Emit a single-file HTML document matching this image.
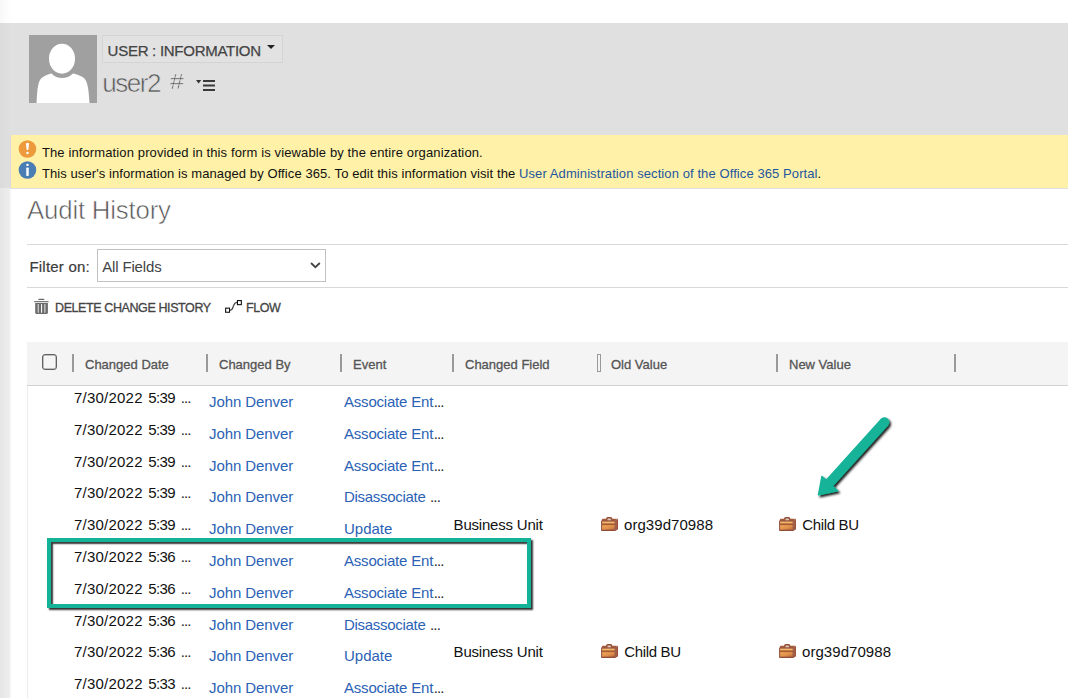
<!DOCTYPE html>
<html lang="en">
<head>
<meta charset="utf-8">
<title>User: Information - Audit History</title>
<style>
html,body{margin:0;padding:0;}
body{width:1068px;height:698px;overflow:hidden;background:#fff;position:relative;
  font-family:"Liberation Sans",sans-serif;color:#000;}
.abs{position:absolute;white-space:nowrap;}
#leftfade{left:0;top:0;width:12px;height:698px;
  background:linear-gradient(to right,#e6e6e6 0,#eeeeee 9.8px,#fbfbfb 10.6px,#fff 12px);}
#topwhite{left:0;top:0;width:1068px;height:23px;background:linear-gradient(to right,#f8f8f8 0,#fdfdfd 8px,#fff 13px);}
#hdr{left:0;top:23px;width:1068px;height:112px;background:#e0e0e0;}
#hdrl{left:0;top:23px;width:10px;height:165px;background:linear-gradient(to right,#dbdbdb 0,#dedede 5px,#dfdfdf 10px);}
#avatar{left:29px;top:35px;width:68px;height:68px;}
#formsel{left:102px;top:35px;width:179px;height:25.5px;border:1px solid #d4d4d4;background:#e2e2e2;box-sizing:content-box;}
#formsel span{position:absolute;left:4.6px;top:6px;font-size:15px;line-height:17px;color:#444;letter-spacing:-0.27px;
  -webkit-text-stroke:0.25px #444;}
#formsel i{position:absolute;left:164px;top:8.5px;width:0;height:0;border-left:4px solid transparent;border-right:4px solid transparent;border-top:4.5px solid #222;}
#uname{left:102.3px;top:68.2px;font-size:26px;line-height:30px;color:#555;letter-spacing:-1.45px;-webkit-text-stroke:0.6px #e0e0e0;}
#hash{left:169.8px;top:67px;font-size:22px;transform:scaleX(1.14);transform-origin:0 0;line-height:30px;color:#555;-webkit-text-stroke:0.5px #e0e0e0;}
#menuic{left:196px;top:79px;width:20px;height:13px;}
#banner{left:10px;top:135px;width:1058px;height:54px;background:#fff1a8;border-bottom:1px solid #dedee4;border-left:1px solid #d8d8de;box-sizing:border-box;}
.bl{font-size:13px;line-height:16px;color:#111;left:41.9px;letter-spacing:0.124px;}
.bl a{color:#1e56a0;text-decoration:none;}
#title{left:27.1px;top:194.6px;font-size:25.8px;line-height:30px;letter-spacing:-0.2px;color:#555;-webkit-text-stroke:0.6px #fff;}
.hr{left:27px;width:1041px;height:1px;background:#d8d8d8;}
#flabel{left:29.4px;top:258px;font-size:15px;line-height:17px;color:#3c3c3c;-webkit-text-stroke:0.22px #3c3c3c;letter-spacing:0.22px;}
#fsel{left:97px;top:249px;width:227px;height:31px;border:1px solid #c1c1c1;border-radius:0;background:#fff;}
#fsel span{position:absolute;left:4.2px;top:8px;font-size:15px;line-height:17px;color:#444;letter-spacing:-0.15px;}
#fsel svg{position:absolute;left:212px;top:12px;}
.tb{font-size:12.5px;line-height:16px;color:#444;-webkit-text-stroke:0.3px #444;top:299.7px;letter-spacing:-0.4px;}
#thead{left:27px;top:342px;width:1041px;height:43px;background:#f4f4f4;border-bottom:1px solid #d2d2d2;box-sizing:content-box;}
.sep{top:354px;width:2px;height:18px;background:#9a9a9a;}
.th{top:356.8px;font-size:13px;line-height:16px;color:#555;-webkit-text-stroke:0.3px #555;}
#cb{left:42px;top:354px;width:13px;height:14px;border:1px solid #606060;border-radius:3px;background:#f5f5f5;box-shadow:inset 0 0 0 0.5px #8a8a8a;}
.d{font-size:15px;line-height:17px;color:#111;left:74px;}
.n,.e{font-size:15px;line-height:17px;color:#2b62b5;}
.n{left:209px;letter-spacing:-0.08px;}
.d1{letter-spacing:0.22px;}
.d2{letter-spacing:-0.65px;margin-left:1.4px;margin-right:1.6px;}
.el{letter-spacing:-0.85px;color:#222;}
.e1{letter-spacing:-0.2px;}
.e2{letter-spacing:-0.29px;}
.e .el{margin-left:0.6px;}
.o,.v{letter-spacing:0.06px;}
.cbu{letter-spacing:-0.36px;margin-left:0.3px;}
.e{left:344px;}
.f,.o,.v{font-size:15px;line-height:17px;color:#111;}
.f{left:453.6px;letter-spacing:-0.2px;}
.o{left:624px;}
.v{left:802px;}
.bc{width:17px;height:14px;}
#vline{left:27px;top:386px;width:1px;height:312px;background:#ececec;}
#tealbox{left:47px;top:538px;width:476px;height:62px;border:4px solid #13b398;
  box-shadow:2px 2px 1.6px rgba(0,0,0,0.78), inset 2px 2px 1.6px rgba(0,0,0,0.78);}
</style>
</head>
<body>
<div class="abs" id="leftfade"></div>
<div class="abs" id="topwhite"></div>
<div class="abs" id="hdr"></div>
<div class="abs" id="hdrl"></div>
<svg class="abs" id="avatar" viewBox="0 0 68 68">
  <rect width="68" height="68" fill="#a0a0a0"/>
  <path d="M7.5 68 C8.5 52 9 45 14 42 C18 39.5 20 39 22.5 38.5 C28 44.5 38 44.5 44 38.5 C47 39 50 40 53.5 42 C58.5 45 59.5 52 60.5 68 Z" fill="#fff"/>
  <ellipse cx="33" cy="23.7" rx="13" ry="15" fill="#fff"/>
</svg>
<div class="abs" id="formsel"><span>USER : INFORMATION</span><i></i></div>
<div class="abs" id="uname">user2</div>
<div class="abs" id="hash">#</div>
<svg class="abs" id="menuic" viewBox="0 0 20 13">
  <path d="M-0.1 0.9 H5.3 L2.6 4.4 Z" fill="#333"/>
  <rect x="7" y="1" width="12" height="2" fill="#3a3a3a"/>
  <rect x="7" y="5.5" width="12" height="2" fill="#3a3a3a"/>
  <rect x="7" y="10" width="12" height="2" fill="#3a3a3a"/>
</svg>

<div class="abs" id="banner"></div>
<svg class="abs" style="left:18px;top:140px" width="19" height="19" viewBox="0 0 19 19">
  <circle cx="9.45" cy="9.05" r="8.8" fill="#ec9a3c"/>
  <path d="M8 3.9 Q8 3.1 8.8 3.1 H10.2 Q11 3.1 11 3.9 L10.4 9.4 Q10.3 10 9.5 10 Q8.7 10 8.6 9.4 Z" fill="#fff"/>
  <rect x="8.2" y="11.7" width="2.6" height="2.5" rx="1.1" fill="#fff"/>
</svg>
<svg class="abs" style="left:18px;top:161px" width="19" height="19" viewBox="0 0 19 19">
  <circle cx="9.45" cy="9.05" r="8.8" fill="#4a7db4"/>
  <rect x="8.2" y="6.6" width="2.6" height="8.3" rx="0.7" fill="#f4f7fb"/>
  <rect x="8.2" y="2.8" width="2.6" height="2.3" rx="1" fill="#f4f7fb"/>
</svg>
<div class="abs bl" id="bl1" style="top:144.8px">The information provided in this form is viewable by the entire organization.</div>
<div class="abs bl" id="bl2" style="top:165.5px;letter-spacing:0.09px">This user's information is managed by Office 365. To edit this information visit the <a>User Administration section of the Office 365 Portal</a>.</div>

<div class="abs" id="title">Audit History</div>
<div class="abs hr" style="top:244px"></div>
<div class="abs" id="flabel">Filter on:</div>
<div class="abs" id="fsel"><span>All Fields</span>
  <svg width="11" height="7" viewBox="0 0 11 7"><path d="M1 1 L5.4 5.2 L9.8 1" fill="none" stroke="#444" stroke-width="1.8"/></svg>
</div>
<div class="abs hr" style="top:287px"></div>

<svg class="abs" style="left:34px;top:298px" width="15" height="17" viewBox="0 0 15 17">
  <rect x="4.3" y="0.8" width="6.1" height="1.2" rx="0.6" fill="#6a6a6a"/>
  <rect x="0.1" y="2.9" width="14.6" height="1.4" rx="0.5" fill="#7a7a7a"/>
  <path d="M1.2 5.1 H13.9 V14.4 Q13.9 16 12.3 16 H2.8 Q1.2 16 1.2 14.4 Z" fill="#6c6c6c"/>
  <rect x="3.65" y="6" width="1.2" height="8.8" rx="0.5" fill="#d2d2d2"/>
  <rect x="7" y="6" width="1.1" height="8.8" rx="0.5" fill="#f6f6f6"/>
  <rect x="10.25" y="6" width="1.2" height="8.8" rx="0.5" fill="#d2d2d2"/>
</svg>
<div class="abs tb" id="tb1" style="left:55px">DELETE CHANGE HISTORY</div>
<svg class="abs" style="left:225px;top:299px" width="18" height="15" viewBox="0 0 18 15">
  <rect x="0.65" y="9.15" width="3.9" height="4.1" fill="none" stroke="#111" stroke-width="1.1"/>
  <rect x="12.45" y="1.55" width="3.9" height="4.1" fill="none" stroke="#111" stroke-width="1.1"/>
  <path d="M5 11.3 C8 11.3 7.6 8.6 8.7 6.2 C9.6 4 9.8 3.3 12 3.3" fill="none" stroke="#444" stroke-width="1.3"/>
</svg>
<div class="abs tb" id="tb2" style="left:246px">FLOW</div>

<div class="abs" id="thead"></div>
<div class="abs" id="vline"></div>
<div class="abs" id="cb"></div>
<div class="abs sep" style="left:72px"></div>
<div class="abs sep" style="left:206px"></div>
<div class="abs sep" style="left:340px"></div>
<div class="abs sep" style="left:452px"></div>
<div class="abs sep" style="left:597px;background:none;border:1px solid #9a9a9a;width:2px;box-sizing:content-box;height:16px"></div>
<div class="abs sep" style="left:776px"></div>
<div class="abs sep" style="left:954px"></div>
<div class="abs th" style="left:85px">Changed Date</div>
<div class="abs th" style="left:219px">Changed By</div>
<div class="abs th" style="left:353px">Event</div>
<div class="abs th" style="left:465px">Changed Field</div>
<div class="abs th" style="left:611px">Old Value</div>
<div class="abs th" style="left:789px">New Value</div>


<svg width="0" height="0" style="position:absolute">
  <defs>
    <linearGradient id="bcg" x1="0" y1="0" x2="0" y2="1">
      <stop offset="0" stop-color="#d98a44"/><stop offset="0.45" stop-color="#f0b264"/><stop offset="0.5" stop-color="#c97c3c"/><stop offset="1" stop-color="#e09850"/>
    </linearGradient>
    <symbol id="bcase" viewBox="0 0 17 14">
      <path d="M5.7 3.4 V2 Q5.7 0.7 7 0.7 H9.4 Q10.7 0.7 10.7 2 V3.4" fill="none" stroke="#8a4a30" stroke-width="1.4"/>
      <path d="M0.3 4 L1.4 1.7 H16.4 L14.6 4 Z" fill="#a25a3c"/>
      <path d="M14.4 4 L17 1.8 V12.2 L14.4 13.9 Z" fill="#98503a"/>
      <path d="M15.3 4.2 L16.1 3.5 V12 L15.3 12.6 Z" fill="#b87050" opacity="0.7"/>
      <rect x="6.6" y="2" width="3.2" height="1.4" fill="#dcc6bc"/>
      <rect x="0.1" y="3.7" width="14.6" height="10.2" rx="0.7" fill="#8f4c38"/>
      <rect x="1.1" y="4.6" width="12.6" height="2.1" fill="url(#bcg1)"/>
      <rect x="1.1" y="6.7" width="12.6" height="1.4" fill="#a85a34"/>
      <rect x="1.1" y="8.1" width="12.6" height="4.6" fill="url(#bcg2)"/>
    </symbol>
    <linearGradient id="bcg1" x1="0" y1="0" x2="0" y2="1"><stop offset="0" stop-color="#f6c67a"/><stop offset="1" stop-color="#eba653"/></linearGradient>
    <linearGradient id="bcg2" x1="0" y1="0" x2="1" y2="1"><stop offset="0" stop-color="#f0a655"/><stop offset="0.55" stop-color="#e0924c"/><stop offset="1" stop-color="#b8683e"/></linearGradient>
    <filter id="ds" x="-20%" y="-20%" width="150%" height="150%">
      <feDropShadow dx="1.7" dy="1.9" stdDeviation="0.9" flood-color="#000" flood-opacity="0.9"/>
    </filter>
  </defs>
</svg>
<div id="rows">
<div class="abs d" style="top:388.9px"><span class="d1">7/30/2022</span> <span class="d2">5:39</span> <span class="el">...</span></div>
<div class="abs n" style="top:392.9px">John Denver</div>
<div class="abs e" style="top:392.9px"><span class="e1">Associate Ent</span><span class="el">...</span></div>
<div class="abs d" style="top:420.7px"><span class="d1">7/30/2022</span> <span class="d2">5:39</span> <span class="el">...</span></div>
<div class="abs n" style="top:424.7px">John Denver</div>
<div class="abs e" style="top:424.7px"><span class="e1">Associate Ent</span><span class="el">...</span></div>
<div class="abs d" style="top:452.5px"><span class="d1">7/30/2022</span> <span class="d2">5:39</span> <span class="el">...</span></div>
<div class="abs n" style="top:456.5px">John Denver</div>
<div class="abs e" style="top:456.5px"><span class="e1">Associate Ent</span><span class="el">...</span></div>
<div class="abs d" style="top:484.3px"><span class="d1">7/30/2022</span> <span class="d2">5:39</span> <span class="el">...</span></div>
<div class="abs n" style="top:488.3px">John Denver</div>
<div class="abs e" style="top:488.3px"><span class="e2">Disassociate </span><span class="el">...</span></div>
<div class="abs d" style="top:516.1px"><span class="d1">7/30/2022</span> <span class="d2">5:39</span> <span class="el">...</span></div>
<div class="abs n" style="top:520.1px">John Denver</div>
<div class="abs e" style="top:520.1px">Update</div>
<div class="abs f" style="top:516.1px">Business Unit</div>
<svg class="abs bc" style="left:601px;top:517.0px" viewBox="0 0 17 14"><use href="#bcase"/></svg>
<div class="abs o " style="top:516.1px">org39d70988</div>
<svg class="abs bc" style="left:779px;top:517.0px" viewBox="0 0 17 14"><use href="#bcase"/></svg>
<div class="abs v cbu" style="top:516.1px">Child BU</div>
<div class="abs d" style="top:547.9px"><span class="d1">7/30/2022</span> <span class="d2">5:36</span> <span class="el">...</span></div>
<div class="abs n" style="top:551.9px">John Denver</div>
<div class="abs e" style="top:551.9px"><span class="e1">Associate Ent</span><span class="el">...</span></div>
<div class="abs d" style="top:579.7px"><span class="d1">7/30/2022</span> <span class="d2">5:36</span> <span class="el">...</span></div>
<div class="abs n" style="top:583.7px">John Denver</div>
<div class="abs e" style="top:583.7px"><span class="e1">Associate Ent</span><span class="el">...</span></div>
<div class="abs d" style="top:611.5px"><span class="d1">7/30/2022</span> <span class="d2">5:36</span> <span class="el">...</span></div>
<div class="abs n" style="top:615.5px">John Denver</div>
<div class="abs e" style="top:615.5px"><span class="e2">Disassociate </span><span class="el">...</span></div>
<div class="abs d" style="top:643.3px"><span class="d1">7/30/2022</span> <span class="d2">5:36</span> <span class="el">...</span></div>
<div class="abs n" style="top:647.3px">John Denver</div>
<div class="abs e" style="top:647.3px">Update</div>
<div class="abs f" style="top:643.3px">Business Unit</div>
<svg class="abs bc" style="left:601px;top:644.2px" viewBox="0 0 17 14"><use href="#bcase"/></svg>
<div class="abs o cbu" style="top:643.3px">Child BU</div>
<svg class="abs bc" style="left:779px;top:644.2px" viewBox="0 0 17 14"><use href="#bcase"/></svg>
<div class="abs v " style="top:643.3px">org39d70988</div>
<div class="abs d" style="top:675.1px"><span class="d1">7/30/2022</span> <span class="d2">5:33</span> <span class="el">...</span></div>
<div class="abs n" style="top:679.1px">John Denver</div>
<div class="abs e" style="top:679.1px"><span class="e1">Associate Ent</span><span class="el">...</span></div>
</div><!--rows-->

<div class="abs" id="tealbox"></div>
<svg class="abs" style="left:790px;top:400px" width="120" height="120" viewBox="790 400 120 120">
  <g filter="url(#ds)" fill="#13b398" stroke="#13b398">
    <line x1="884.3" y1="422.3" x2="829" y2="483.5" stroke-width="10" stroke-linecap="round"/>
    <path d="M818.5 494.8 L822 476.5 L837.5 490.8 Z" stroke-width="1.5" stroke-linejoin="round"/>
  </g>
</svg>
</body>
</html>
